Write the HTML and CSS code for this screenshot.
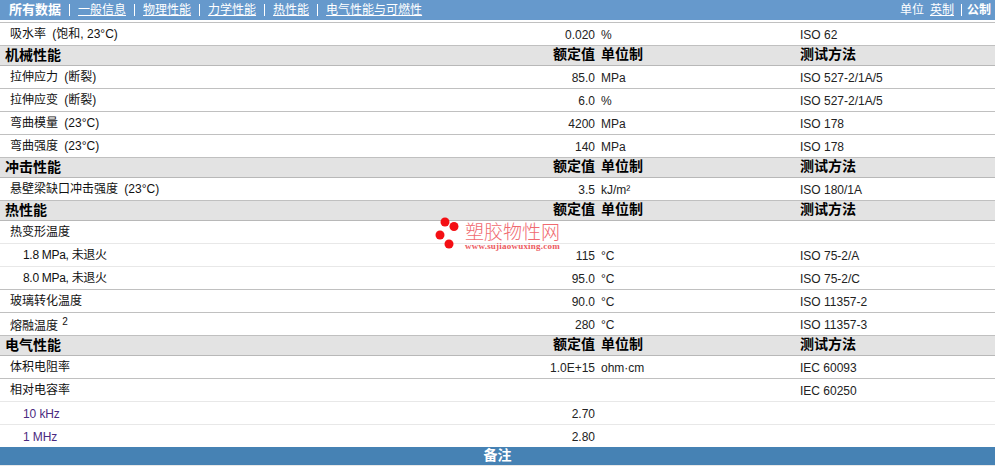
FILE: index.html
```html
<!DOCTYPE html>
<html lang="zh">
<head>
<meta charset="utf-8">
<title>所有数据</title>
<link rel="stylesheet" href="styles.css">
</head>
<body>
<div class="page">
  <nav class="topbar">
    <div class="tabs">
      <b class="tab-current">所有数据</b><i class="sep"></i>
      <a href="#">一般信息</a><i class="sep"></i>
      <a href="#">物理性能</a><i class="sep"></i>
      <a href="#">力学性能</a><i class="sep"></i>
      <a href="#">热性能</a><i class="sep"></i>
      <a href="#">电气性能与可燃性</a>
    </div>
    <div class="units">
      <span>单位</span><a href="#">英制</a><i class="sep sep-tight"></i><b>公制</b>
    </div>
  </nav>
  <table class="data">
    <colgroup><col class="c-name"><col class="c-val"><col class="c-unit"><col class="c-test"></colgroup>
    <tbody>
      <tr class="first"><td class="name">吸水率 <span class="cond">(饱和, 23°C)</span></td><td class="val">0.020</td><td class="unit">%</td><td class="test">ISO 62</td></tr>
      <tr class="sec"><th class="sec-name">机械性能</th><th class="val">额定值</th><th class="unit">单位制</th><th class="test">测试方法</th></tr>
      <tr><td class="name">拉伸应力 <span class="cond">(断裂)</span></td><td class="val">85.0</td><td class="unit">MPa</td><td class="test">ISO 527-2/1A/5</td></tr>
      <tr><td class="name">拉伸应变 <span class="cond">(断裂)</span></td><td class="val">6.0</td><td class="unit">%</td><td class="test">ISO 527-2/1A/5</td></tr>
      <tr><td class="name">弯曲模量 <span class="cond">(23°C)</span></td><td class="val">4200</td><td class="unit">MPa</td><td class="test">ISO 178</td></tr>
      <tr><td class="name">弯曲强度 <span class="cond">(23°C)</span></td><td class="val">140</td><td class="unit">MPa</td><td class="test">ISO 178</td></tr>
      <tr class="sec"><th class="sec-name">冲击性能</th><th class="val">额定值</th><th class="unit">单位制</th><th class="test">测试方法</th></tr>
      <tr><td class="name">悬壁梁缺口冲击强度 <span class="cond">(23°C)</span></td><td class="val">3.5</td><td class="unit">kJ/m²</td><td class="test">ISO 180/1A</td></tr>
      <tr class="sec"><th class="sec-name">热性能</th><th class="val">额定值</th><th class="unit">单位制</th><th class="test">测试方法</th></tr>
      <tr class="soft"><td class="name">热变形温度</td><td class="val"></td><td class="unit"></td><td class="test"></td></tr>
      <tr class="soft"><td class="name sub">1.8 MPa, 未退火</td><td class="val">115</td><td class="unit">°C</td><td class="test">ISO 75-2/A</td></tr>
      <tr><td class="name sub">8.0 MPa, 未退火</td><td class="val">95.0</td><td class="unit">°C</td><td class="test">ISO 75-2/C</td></tr>
      <tr><td class="name">玻璃转化温度</td><td class="val">90.0</td><td class="unit">°C</td><td class="test">ISO 11357-2</td></tr>
      <tr><td class="name has-note">熔融温度 <sup>2</sup></td><td class="val">280</td><td class="unit">°C</td><td class="test">ISO 11357-3</td></tr>
      <tr class="sec"><th class="sec-name">电气性能</th><th class="val">额定值</th><th class="unit">单位制</th><th class="test">测试方法</th></tr>
      <tr><td class="name">体积电阻率</td><td class="val">1.0E+15</td><td class="unit">ohm·cm</td><td class="test">IEC 60093</td></tr>
      <tr class="soft"><td class="name">相对电容率</td><td class="val"></td><td class="unit"></td><td class="test">IEC 60250</td></tr>
      <tr class="soft"><td class="name sub freq">10 kHz</td><td class="val">2.70</td><td class="unit"></td><td class="test"></td></tr>
      <tr class="last"><td class="name sub freq">1 MHz</td><td class="val">2.80</td><td class="unit"></td><td class="test"></td></tr>
    </tbody>
  </table>
  <div class="notes">备注</div>
  <div class="watermark">
    <svg class="dots" width="30" height="36" viewBox="0 0 30 36"><circle cx="10" cy="6" r="4.5"/><circle cx="19" cy="10.500" r="4.500"/><circle cx="5" cy="19" r="4.500"/><circle cx="14" cy="28" r="4.500"/></svg>
    <div class="wm-text">
      <div class="wm-title">塑胶物性网</div>
      <div class="wm-url">www.sujiaowuxing.com</div>
    </div>
  </div>
</div>
</body>
</html>
```

FILE: styles.css
```css
* { box-sizing: border-box; }
html, body { margin: 0; padding: 0; background: #fff; }
body {
  font-family: "Liberation Sans", "Noto Sans CJK SC", sans-serif;
  font-size: 12px;
  color: #222;
  overflow: hidden;
}
.page { position: relative; width: 995px; height: 467px; }

.topbar {
  height: 20px;
  background: #6699cc;
  color: #fff;
  display: flex;
  justify-content: space-between;
  align-items: center;
  padding: 0 4px 1px 9px;
  margin-bottom: 2px;
  line-height: 14px;
}
.topbar a { color: #fff; text-decoration: underline; }
.tabs, .units { display: flex; align-items: center; }
.tab-current { font-size: 13px; }
.sep { display: block; width: 1px; height: 12px; background: #fff; margin: 0 8px; }
.sep-tight { margin: 0 5px 0 7px; }
.units a { margin-left: 6px; }
.units b { font-size: 12px; }

.data {
  width: 995px;
  table-layout: fixed;
  border-collapse: separate;
  border-spacing: 0;
  border-top: 1px solid #c0c0c0;
}
.c-name { width: 537px; }
.c-val { width: 60px; }
.c-unit { width: 200px; }
.data td, .data th {
  height: 23px;
  padding: 0;
  border-bottom: 1px solid #c0c0c0;
  font-weight: normal;
  vertical-align: middle;
  white-space: nowrap;
  line-height: 14px;
}
.data .soft td { border-bottom-color: #e8e8e8; }
.data .last td { border-bottom: 0; height: 22px; }
.data td.name { padding-left: 10px; color: #111; }
.data td.has-note { padding-top: 3px; }
.data td.sub { padding-left: 23px; letter-spacing: -.3px; }
.data td.freq { color: #4b2a80; padding-top: 2px; letter-spacing: -.1px; }
.data td.val, .data td.unit, .data td.test { padding-top: 2px; }
.data .val { text-align: right; padding-right: 2px; }
.data .unit { padding-left: 4px; }
.data .test { padding-left: 3px; }
.cond { margin-left: 3px; }
sup { font-size: 10px; line-height: 0; vertical-align: 5px; margin-left: 1px; }

.data .sec th {
  height: 20px;
  background: #e3e3e3;
  color: #000;
  font-size: 14px;
  font-weight: bold;
  text-align: left;
  border-bottom-color: #b8b8b8;
  padding-bottom: 3px;
}
.data .sec th.sec-name { padding-left: 5px; padding-bottom: 2px; }
.data .sec th.val { text-align: right; padding-right: 2px; }
.data .sec th.unit { padding-left: 4px; }
.data .sec th.test { padding-left: 3px; }

.notes {
  height: 18px;
  background: #4682b4;
  color: #fff;
  font-size: 14px;
  font-weight: bold;
  line-height: 16px;
  text-align: center;
  box-shadow: 0 1px 0 #e8e8e8;
}

.watermark {
  position: absolute;
  left: 435px;
  top: 216px;
  display: flex;
  pointer-events: none;
}
.dots { fill: #f40f14; display: block; }
.wm-title {
  font-family: "Noto Sans CJK SC", sans-serif;
  font-size: 19px;
  font-weight: 300;
  line-height: 20px;
  color: #f06a70;
  margin-top: 5px;
  white-space: nowrap;
}
.wm-url {
  font-family: "Liberation Serif", serif;
  font-size: 9px;
  font-weight: bold;
  line-height: 9px;
  letter-spacing: .22px;
  margin-top: 1px;
  color: #ec5a60;
  white-space: nowrap;
}
```
